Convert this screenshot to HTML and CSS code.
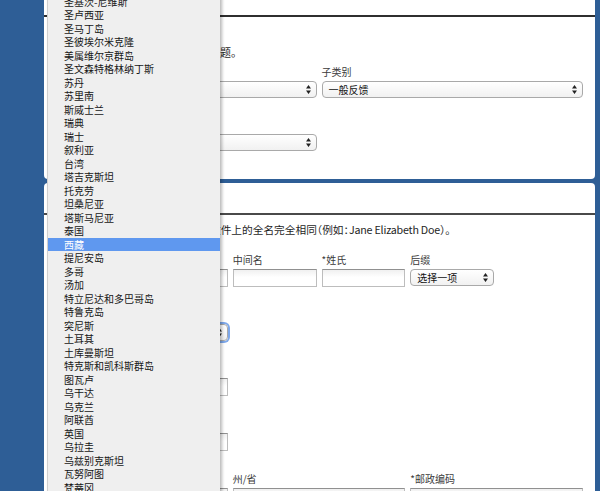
FILE: index.html
```html
<!DOCTYPE html>
<html lang="zh-CN">
<head>
<meta charset="utf-8">
<title>表单</title>
<link rel="stylesheet" href="styles.css">
</head>
<body>
<div class="page">
  <section class="panel panel-first">
    <div class="panel-head"></div>
    <div class="panel-body body-first">
      <p class="intro">请选择最能准确描述您所遇到的问题。</p>
      <div class="grid">
        <div class="field span3">
          <label class="lbl">*类别</label>
          <div class="select"><span class="val"></span><svg class="arrows" width="5" height="9" viewBox="0 0 5 9"><path d="M2.5 0 L5 3.5 L0 3.5 Z M2.5 9 L5 5.5 L0 5.5 Z" fill="#222"/></svg></div>
        </div>
        <div class="field span3">
          <label class="lbl">子类别</label>
          <div class="select"><span class="val">一般反馈</span><svg class="arrows" width="5" height="9" viewBox="0 0 5 9"><path d="M2.5 0 L5 3.5 L0 3.5 Z M2.5 9 L5 5.5 L0 5.5 Z" fill="#222"/></svg></div>
        </div>
        <div class="field span3">
          <label class="lbl">*产品</label>
          <div class="select"><span class="val"></span><svg class="arrows" width="5" height="9" viewBox="0 0 5 9"><path d="M2.5 0 L5 3.5 L0 3.5 Z M2.5 9 L5 5.5 L0 5.5 Z" fill="#222"/></svg></div>
        </div>
      </div>
    </div>
  </section>

  <section class="panel panel-second">
    <div class="panel-head head-second"></div>
    <div class="panel-body body-second">
      <p class="intro tight">您的姓名，须与您提供的身份证明文件上的全名完全相同（例如：<span class="latin">Jane Elizabeth Doe</span>）。</p>
      <div class="grid">
        <div class="field span2">
          <label class="lbl">*名字</label>
          <div class="input"></div>
        </div>
        <div class="field span1">
          <label class="lbl">中间名</label>
          <div class="input"></div>
        </div>
        <div class="field span1">
          <label class="lbl">*姓氏</label>
          <div class="input"></div>
        </div>
        <div class="field span1">
          <label class="lbl">后缀</label>
          <div class="select"><span class="val">选择一项</span><svg class="arrows" width="5" height="9" viewBox="0 0 5 9"><path d="M2.5 0 L5 3.5 L0 3.5 Z M2.5 9 L5 5.5 L0 5.5 Z" fill="#222"/></svg></div>
        </div>
        <div class="field span1"></div>

        <div class="field span2">
          <label class="lbl">*国家/地区</label>
          <div class="select focused"><span class="val">西藏</span><svg class="arrows" width="5" height="9" viewBox="0 0 5 9"><path d="M2.5 0 L5 3.5 L0 3.5 Z M2.5 9 L5 5.5 L0 5.5 Z" fill="#222"/></svg></div>
        </div>
        <div class="field span4"></div>

        <div class="field span2">
          <label class="lbl">*地址</label>
          <div class="input"></div>
        </div>
        <div class="field span4"></div>

        <div class="field span2">
          <label class="lbl">地址第二行</label>
          <div class="input"></div>
        </div>
        <div class="field span4"></div>

        <div class="field span2">
          <label class="lbl">*城市</label>
          <div class="input"></div>
        </div>
        <div class="field span2">
          <label class="lbl">州/省</label>
          <div class="input"></div>
        </div>
        <div class="field span2">
          <label class="lbl">*邮政编码</label>
          <div class="input"></div>
        </div>
      </div>
    </div>
  </section>
</div>

<ul class="popup">
  <li>圣基茨-尼维斯</li>
  <li>圣卢西亚</li>
  <li>圣马丁岛</li>
  <li>圣彼埃尔米克隆</li>
  <li>美属维尔京群岛</li>
  <li>圣文森特格林纳丁斯</li>
  <li>苏丹</li>
  <li>苏里南</li>
  <li>斯威士兰</li>
  <li>瑞典</li>
  <li>瑞士</li>
  <li>叙利亚</li>
  <li>台湾</li>
  <li>塔吉克斯坦</li>
  <li>托克劳</li>
  <li>坦桑尼亚</li>
  <li>塔斯马尼亚</li>
  <li>泰国</li>
  <li class="active">西藏</li>
  <li>提尼安岛</li>
  <li>多哥</li>
  <li>汤加</li>
  <li>特立尼达和多巴哥岛</li>
  <li>特鲁克岛</li>
  <li>突尼斯</li>
  <li>土耳其</li>
  <li>土库曼斯坦</li>
  <li>特克斯和凯科斯群岛</li>
  <li>图瓦卢</li>
  <li>乌干达</li>
  <li>乌克兰</li>
  <li>阿联酋</li>
  <li>英国</li>
  <li>乌拉圭</li>
  <li>乌兹别克斯坦</li>
  <li>瓦努阿图</li>
  <li>梵蒂冈</li>
  <li>委内瑞拉</li>
</ul>
</body>
</html>
```

FILE: styles.css
```css
html, body {
  overflow: hidden;
  height: 100%;
}

body {
  margin: 0;
  position: relative;
  background: #2e5e96;
  font-family: "Noto Sans CJK SC", "Noto Sans", sans-serif;
  color: #222;
}

.page {
  margin: -10px 5px 0 44px;
  display: flex;
  flex-direction: column;
  gap: 4px;
}

.panel {
  background: #fff;
  border-radius: 4px;
}

.panel-head {
  height: 25px;
  border-bottom: 2px solid #2f2f2f;
}

.head-second {
  height: 30px;
  border-bottom: 2px solid #4a4a4a;
}

.panel-body {
  padding: 0 12px 0 11px;
}

.body-first {
  padding-top: 27px;
  padding-bottom: 28px;
}

.body-second {
  padding-top: 7px;
  padding-bottom: 40px;
}

.intro {
  margin: 0;
  font-size: 11px;
  line-height: 16px;
  color: #1e1e1e;
  white-space: nowrap;
}

.intro.tight {
  font-size: 10.7px;
  font-feature-settings: "halt" 1;
}

.latin {
  font-feature-settings: normal;
  letter-spacing: -0.2px;
}

.body-first .intro {
  margin-bottom: 5px;
}

.body-second .intro {
  margin-bottom: 15px;
}

.grid {
  display: grid;
  grid-template-columns: repeat(6, 1fr);
  column-gap: 5px;
  row-gap: 20px;
}

.body-second .grid {
  row-gap: 21px;
}

.span1 { grid-column: span 1; }
.span2 { grid-column: span 2; }
.span3 { grid-column: span 3; }
.span4 { grid-column: span 4; }

.field {
  display: flex;
  flex-direction: column;
  gap: 2px;
}

.lbl {
  display: block;
  font-size: 10px;
  line-height: 14px;
  height: 14px;
  color: #3a3a3a;
}

.select {
  box-sizing: border-box;
  height: 17px;
  border: 1px solid #a9a9a9;
  border-radius: 4px;
  background: linear-gradient(#ffffff, #f1f1f1);
  display: flex;
  align-items: center;
  justify-content: space-between;
  padding: 0 5px 0 6px;
  font-size: 10px;
  line-height: 15px;
  color: #111;
}

.select.focused {
  box-shadow: 0 0 0 2px #7ea8ea;
}

.arrows {
  flex: none;
  display: block;
}

.input {
  box-sizing: border-box;
  height: 18px;
  border: 1px solid #bdbdbd;
  border-top-color: #909090;
  background: linear-gradient(#f0f0f0, #ffffff 45%);
}

.popup {
  position: absolute;
  left: 47px;
  top: -5.5px;
  width: 173px;
  box-sizing: border-box;
  margin: 0;
  padding: 0;
  list-style: none;
  background: #efefef;
  border-left: 1px solid #cfcfcf;
  box-shadow: 2px 0 3px rgba(0, 0, 0, 0.28);
}

.popup li {
  height: 13.5px;
  line-height: 13.5px;
  padding-left: 16px;
  font-size: 10px;
  color: #161616;
  white-space: nowrap;
}

.popup li.active {
  background: #5f98ef;
  color: #fff;
}
```
